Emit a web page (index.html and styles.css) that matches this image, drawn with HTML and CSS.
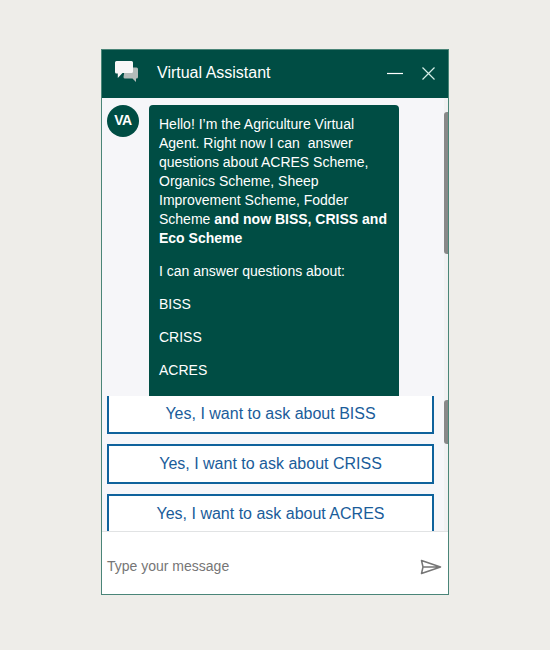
FILE: index.html
```
<!DOCTYPE html>
<html lang="en">
<head>
<meta charset="utf-8">
<title>Virtual Assistant</title>
<link rel="stylesheet" href="styles.css">
</head>
<body>
<main class="chat">
  <header class="chat-header">
    <svg class="logo" width="24" height="22" viewBox="0 0 24 22">
      <path fill="#b3bcba" d="M10 6.500h11.500a1.500 1.500 0 0 1 1.500 1.500v8a1.500 1.500 0 0 1-1.500 1.500H21v3.500L17.500 17.500H10a1.500 1.500 0 0 1-1.500-1.500z"/>
      <path fill="#f7f7f7" d="M1.500 0H16.500a1.500 1.500 0 0 1 1.500 1.500v9a1.500 1.500 0 0 1-1.500 1.500H7.500L2.800 17V12.500H1.500A1.500 1.500 0 0 1 0 11V1.500A1.500 1.500 0 0 1 1.500 0z"/>
    </svg>
    <h1 class="title">Virtual Assistant</h1>
    <svg class="minimize" width="16" height="16" viewBox="0 0 16 16"><path d="M0 8.500H16"/></svg>
    <svg class="close" width="13" height="13" viewBox="0 0 13 13"><path d="M.5.5l12 12M12.500.5l-12 12"/></svg>
  </header>
  <section class="messages">
    <div class="avatar">VA</div>
    <div class="bubble">
      <p>Hello! I’m the Agriculture Virtual Agent. Right now I can&nbsp; answer questions about ACRES Scheme, Organics Scheme, Sheep Improvement Scheme, Fodder Scheme <strong>and now BISS, CRISS and Eco Scheme</strong></p>
      <p>I can answer questions about:</p>
      <p>BISS</p>
      <p>CRISS</p>
      <p>ACRES</p>
    </div>
    <div class="track"><div class="thumb"></div></div>
  </section>
  <section class="replies">
    <div class="reply-list">
      <button class="reply">Yes, I want to ask about BISS</button>
      <button class="reply">Yes, I want to ask about CRISS</button>
      <button class="reply">Yes, I want to ask about ACRES</button>
    </div>
    <div class="track"><div class="thumb thumb-short"></div></div>
  </section>
  <footer class="composer">
    <span class="placeholder">Type your message</span>
    <svg class="send" width="22" height="16" viewBox="0 0 22 16"><path d="M1.500 1.500L20.500 8L1.500 14.500L3 8zM3 8H20"/></svg>
  </footer>
</main>
</body>
</html>
```
FILE: styles.css
```
* { box-sizing: border-box; }

body {
  margin: 0;
  height: 650px;
  padding: 49px 0 0 101px;
  background: #eeede9;
  font-family: "Liberation Sans", Arial, sans-serif;
  overflow: hidden;
}

.chat {
  width: 348px;
  height: 546px;
  display: flex;
  flex-direction: column;
  border: 1px solid #4a8578;
  background: #fff;
}

.chat-header {
  flex: 0 0 48px;
  display: flex;
  align-items: center;
  padding: 0 13px;
  background: #004d44;
  color: #fff;
}

.title {
  flex: 1;
  margin: 0 0 0 18px;
  font-size: 16px;
  font-weight: 400;
  line-height: 20px;
  position: relative;
  top: -1px;
}

.logo { position: relative; top: -2px; }

.minimize, .close {
  fill: none;
  stroke: #d5eee8;
  stroke-width: 1.2;
}

.minimize { margin-right: 19px; stroke: #fff; position: relative; top: -1px; }
.close { position: relative; top: -1px; }

.messages {
  flex: 0 0 298px;
  display: flex;
  align-items: flex-start;
  overflow: hidden;
  padding-left: 5px;
  background: #f6f6f9;
}

.avatar {
  width: 32px;
  height: 32px;
  margin: 7px 10px 0 0;
  border-radius: 50%;
  background: #004d44;
  color: #fff;
  font-size: 14px;
  font-weight: 700;
  letter-spacing: -0.5px;
  line-height: 31px;
  text-align: center;
}

.bubble {
  width: 250px;
  height: 330px;
  margin-top: 7px;
  padding: 10px;
  border-radius: 4px;
  background: #004d44;
  color: #fff;
  font-size: 14px;
  line-height: 19px;
}

.bubble p { margin: 0 0 14px; }

.track {
  width: 4px;
  margin-left: auto;
  align-self: stretch;
  background: #f1f1f2;
}

.thumb {
  height: 142px;
  margin-top: 14px;
  border-radius: 3px 0 0 3px;
  background: #888;
}

.thumb-short { height: 44px; margin-top: 4px; }

.replies {
  flex: 0 0 135px;
  display: flex;
  overflow: hidden;
  padding-left: 5px;
  background: #f6f6f9;
}

.reply-list {
  display: flex;
  flex-direction: column;
  gap: 10px;
  width: 327px;
  margin-top: -2px;
}

.reply {
  flex: 0 0 40px;
  padding: 0;
  border: 2px solid #0f629c;
  background: #fff;
  color: #1a5c9a;
  font: 16px "Liberation Sans", Arial, sans-serif;
}

.composer {
  flex: 1;
  display: flex;
  align-items: center;
  justify-content: space-between;
  padding: 6px 6px 0 5px;
  border-top: 1px solid #e1e3e4;
}

.placeholder { color: #767676; font-size: 14px; }

.send {
  fill: none;
  stroke: #767676;
  stroke-width: 1.500;
  stroke-linejoin: round;
  margin-top: 2px;
}
```
